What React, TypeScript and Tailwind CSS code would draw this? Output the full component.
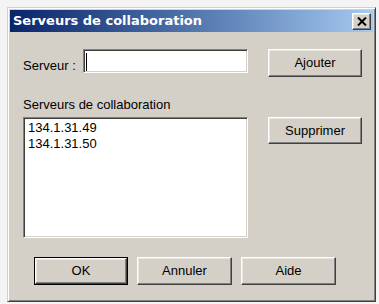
import React from 'react';

const raised =
  'border border-t-white border-l-white border-b-[#404040] border-r-[#404040] shadow-[inset_-1px_-1px_#808080,inset_1px_1px_#e8e6e0]';
const sunken =
  'border border-t-[#808080] border-l-[#808080] border-b-white border-r-white shadow-[inset_1px_1px_#404040,inset_-1px_-1px_#d4d0c8]';

const Btn: React.FC<{ label: string; w: string; h: string; isDefault?: boolean; extra?: string }> = ({
  label,
  w,
  h,
  isDefault,
  extra = '',
}) => {
  if (isDefault) {
    return (
      <div className={`${w} ${h} border border-black flex ${extra}`}>
        <button className={`flex-1 bg-[#d4d0c8] ${raised} flex items-center justify-center text-[13px] leading-[16px] text-black`}>
          {label}
        </button>
      </div>
    );
  }
  return (
    <button
      className={`${w} ${h} bg-[#d4d0c8] ${raised} flex items-center justify-center text-[13px] leading-[16px] text-black ${extra}`}
    >
      {label}
    </button>
  );
};

const App: React.FC = () => {
  const servers = ['134.1.31.49', '134.1.31.50'];

  return (
    <div
      className="w-[379px] h-[304px] bg-[#f4f4f4] pt-[7px] pl-[7px]"
      style={{ fontFamily: '"Liberation Sans", Arial, sans-serif' }}
    >
      <div className="w-[369px] h-[295px] bg-[#d4d0c8] border border-t-[#d4d0c8] border-l-[#d4d0c8] border-b-[#404040] border-r-[#404040] shadow-[inset_1px_1px_#fff,inset_-1px_-1px_#808080] p-[2px] flex flex-col">
        {/* TITLE BAR */}
        <div className="h-[22px] bg-gradient-to-r from-[#0a246a] to-[#a6caf0] flex items-center justify-between pl-[3px] pr-[2px]">
          <span
            className="text-white font-bold text-[13px] leading-[16px]"
            style={{ fontFamily: '"DejaVu Sans", Verdana, sans-serif' }}
          >
            Serveurs de collaboration
          </span>
          <div className={`w-[19px] h-[17px] bg-[#d4d0c8] ${raised} flex items-center justify-center`}>
            <svg width="10" height="9" viewBox="0 0 10 9">
              <path d="M1 0.5 L9 8.5 M9 0.5 L1 8.5" stroke="#000" strokeWidth="2" />
            </svg>
          </div>
        </div>

        {/* SERVER INPUT */}
        <div className="flex items-start mt-[17px] pl-[13px]">
          <span className="w-[60px] mt-[9px] text-[13px] leading-[16px] text-black">Serveur :</span>
          <div className={`w-[165px] h-[24px] bg-white ${sunken} flex items-start pl-[2px] pt-[3px]`}>
            <div className="w-px h-[18px] bg-black" />
          </div>
          <Btn label="Ajouter" w="w-[94px]" h="h-[28px]" extra="ml-[20px]" />
        </div>

        {/* LIST */}
        <div className="mt-[20px] pl-[13px] text-[13px] leading-[16px] text-black">Serveurs de collaboration</div>
        <div className="flex items-start mt-[4px] pl-[13px]">
          <div className={`w-[225px] h-[121px] bg-white ${sunken} pl-[4px] pt-[2px]`}>
            {servers.map((s) => (
              <div key={s} className="text-[13px] leading-[16px] text-black">
                {s}
              </div>
            ))}
          </div>
          <Btn label="Supprimer" w="w-[94px]" h="h-[27px]" extra="ml-[20px]" />
        </div>

        {/* FOOTER BUTTONS */}
        <div className="flex mt-[19px] pl-[24px] gap-[9px]">
          <Btn label="OK" w="w-[94px]" h="h-[28px]" isDefault />
          <Btn label="Annuler" w="w-[95px]" h="h-[28px]" />
          <Btn label="Aide" w="w-[95px]" h="h-[28px]" />
        </div>
      </div>
    </div>
  );
};

export default App;
